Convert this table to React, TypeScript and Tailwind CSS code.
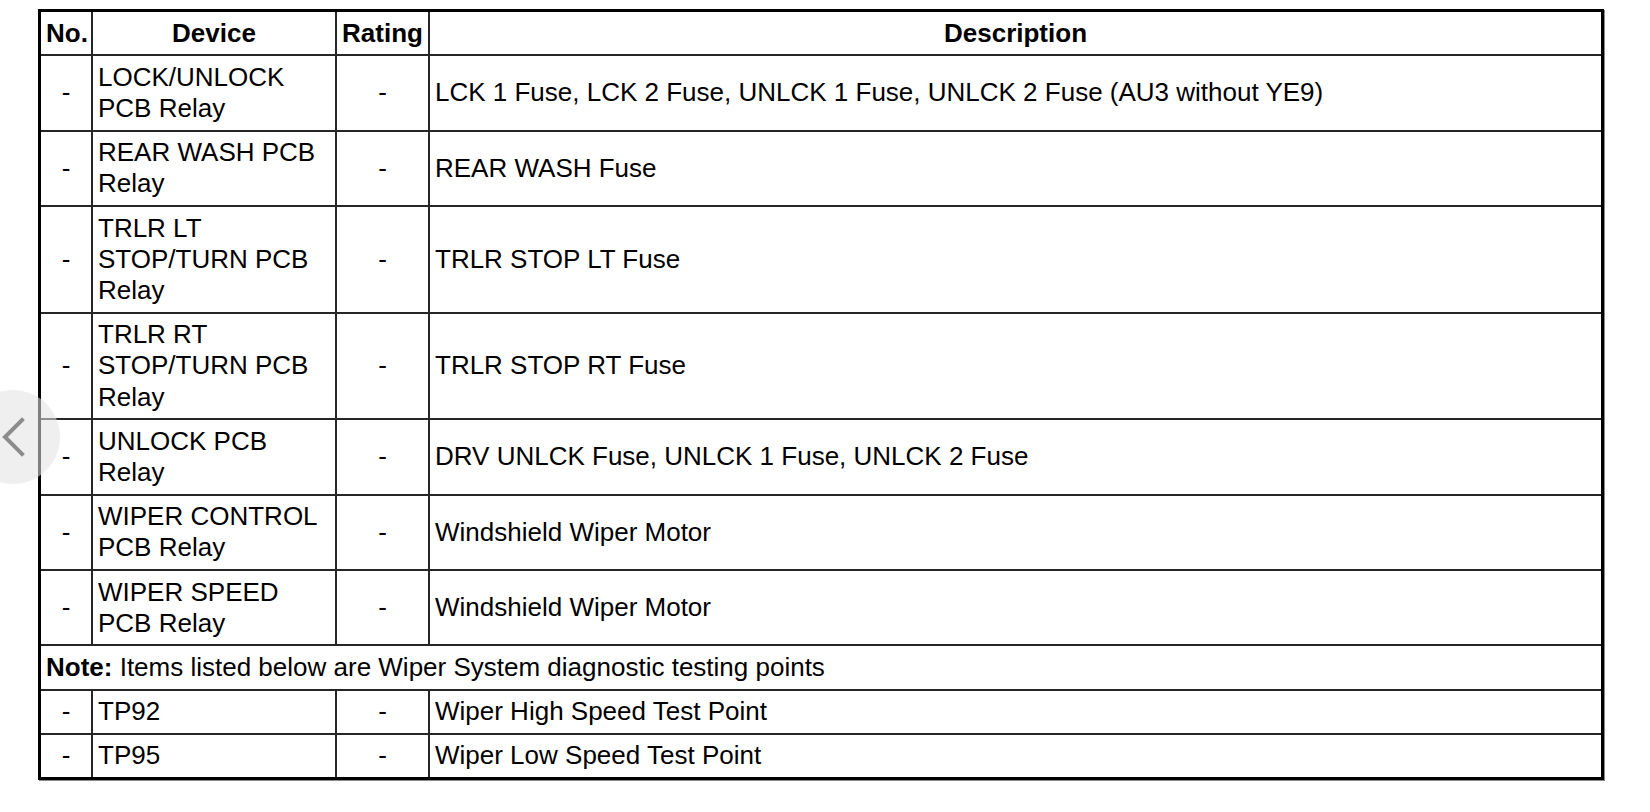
import type { ReactNode } from 'react';

type Row = {
  device: string[];
  description: string;
};

const rows: Row[] = [
  {
    device: ['LOCK/UNLOCK', 'PCB Relay'],
    description: 'LCK 1 Fuse, LCK 2 Fuse, UNLCK 1 Fuse, UNLCK 2 Fuse (AU3 without YE9)',
  },
  { device: ['REAR WASH PCB', 'Relay'], description: 'REAR WASH Fuse' },
  { device: ['TRLR LT', 'STOP/TURN PCB', 'Relay'], description: 'TRLR STOP LT Fuse' },
  { device: ['TRLR RT', 'STOP/TURN PCB', 'Relay'], description: 'TRLR STOP RT Fuse' },
  { device: ['UNLOCK PCB', 'Relay'], description: 'DRV UNLCK Fuse, UNLCK 1 Fuse, UNLCK 2 Fuse' },
  { device: ['WIPER CONTROL', 'PCB Relay'], description: 'Windshield Wiper Motor' },
  { device: ['WIPER SPEED', 'PCB Relay'], description: 'Windshield Wiper Motor' },
];

const testPoints: Row[] = [
  { device: ['TP92'], description: 'Wiper High Speed Test Point' },
  { device: ['TP95'], description: 'Wiper Low Speed Test Point' },
];

type CellProps = {
  children: ReactNode;
  last?: boolean;
  bottom?: boolean;
  className?: string;
  colSpan?: number;
};

const Cell = ({ children, last = false, bottom = false, className = '', colSpan }: CellProps) => (
  <td
    colSpan={colSpan}
    className={`border-[#262626] px-[5px] py-[5.5px] align-middle ${last ? '' : 'border-r-2'} ${bottom ? '' : 'border-b-2'} ${className}`}
  >
    {children}
  </td>
);

const BodyRow = ({ row, bottom = false }: { row: Row; bottom?: boolean }) => (
  <tr>
    <Cell bottom={bottom} className="text-center">-</Cell>
    <Cell bottom={bottom}>
      {row.device.map((line) => (
        <div key={line}>{line}</div>
      ))}
    </Cell>
    <Cell bottom={bottom} className="text-center">-</Cell>
    <Cell bottom={bottom} last>
      {row.description}
    </Cell>
  </tr>
);

export default function App() {
  return (
    <div className="relative min-h-[812px] w-[1650px] overflow-hidden bg-white font-['Liberation_Sans',Arial,sans-serif] text-[26px] leading-[31.2px] text-black">
      <div className="pl-[38px] pt-[9px]">
        <table className="w-[1566px] table-fixed border-separate border-spacing-0 border-[3px] border-black shadow-[1px_1px_0_#8a8a8a]">
          <colgroup>
            <col className="w-[52px]" />
            <col className="w-[244px]" />
            <col className="w-[93px]" />
            <col />
          </colgroup>
          <thead>
            <tr className="font-bold">
              <Cell className="px-0 text-center">No.</Cell>
              <Cell className="text-center">Device</Cell>
              <Cell className="px-0 text-center">Rating</Cell>
              <Cell className="text-center" last>
                Description
              </Cell>
            </tr>
          </thead>
          <tbody>
            {rows.map((row) => (
              <BodyRow key={row.device.join(' ')} row={row} />
            ))}
            <tr>
              <Cell colSpan={4} last className="px-[4px]">
                <span className="font-bold">Note:</span> Items listed below are Wiper System diagnostic testing points
              </Cell>
            </tr>
            {testPoints.map((row, i) => (
              <BodyRow key={row.device[0]} row={row} bottom={i === testPoints.length - 1} />
            ))}
          </tbody>
        </table>
      </div>

      {/* carousel back button over the table edge */}
      <button
        type="button"
        aria-label="Previous"
        className="absolute left-[-34px] top-[390px] flex h-[94px] w-[94px] items-center justify-center rounded-full bg-[rgba(226,226,226,0.56)]"
      >
        <svg width="94" height="94" viewBox="0 0 94 94" fill="none" aria-hidden="true">
          <polyline
            points="56,30 39,47 56,64"
            stroke="#8c8c8c"
            strokeWidth="4"
            strokeLinecap="square"
            strokeLinejoin="miter"
          />
        </svg>
      </button>
    </div>
  );
}
